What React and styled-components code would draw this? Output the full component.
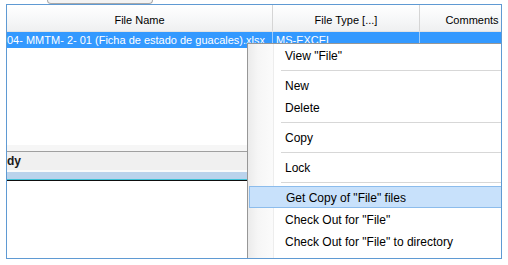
import React from "react";
import styled, { createGlobalStyle } from "styled-components";

const GlobalStyle = createGlobalStyle`
  html, body {
    margin: 0;
    padding: 0;
    background: #ffffff;
  }
  body {
    font-family: "Liberation Sans", Arial, sans-serif;
  }
`;

const Page = styled.div`
  width: 508px;
  height: 265px;
  padding-left: 6px;
  box-sizing: border-box;
`;

const TopStrip = styled.div`
  height: 4px;
  display: flex;
`;

const Tab = styled.div`
  margin-left: 41px;
  width: 104px;
  height: 3px;
  background: #f3f3f3;
  border: 1px solid #a8a8a8;
  border-top: none;
  border-radius: 0 0 4px 4px;
`;

const Frame = styled.div`
  position: relative;
  width: 496px;
  height: 255px;
  box-sizing: border-box;
  border: 1px solid #5f9ad3;
  overflow: hidden;
  display: flex;
  flex-direction: column;
`;

const HeaderRow = styled.div`
  display: flex;
  height: 26px;
  border-bottom: 1px solid #e3e3e3;
  background: linear-gradient(#ffffff, #f7f8f9 50%, #eff0f1);
`;

const HeaderCell = styled.div`
  flex: 0 0 ${(p) => p.$w}px;
  box-sizing: border-box;
  border-right: 1px solid #d5d5d5;
  padding-top: 3px;
  display: flex;
  align-items: center;
  justify-content: center;
  font-size: 11px;
  color: #000;
  white-space: nowrap;
  overflow: hidden;
`;

const DataRow = styled.div`
  display: flex;
  height: 16px;
  background: #3399ff;
`;

const DataCell = styled.div`
  flex: 0 0 ${(p) => p.$w}px;
  box-sizing: border-box;
  border-right: 1px solid #9fcdfb;
  padding-left: ${(p) => p.$pad || 0}px;
  padding-top: 1px;
  font-size: 11px;
  line-height: 15px;
  color: #ffffff;
  white-space: nowrap;
  overflow: hidden;
`;

const Blank = styled.div`
  height: 97px;
  background: #ffffff;
`;

const Fade = styled.div`
  height: 6px;
  background: #f6f6f6;
  border-bottom: 1px solid #a0a0a0;
`;

const GroupBar = styled.div`
  height: 18px;
  background: #f0f0f0;
  border-bottom: 2px solid #fafafa;
  display: flex;
  align-items: center;
  font-size: 12px;
  font-weight: bold;
  color: #1a1a1a;
`;

const BlueBar = styled.div`
  height: 7px;
  background: #bad3ec;
  border-bottom: 1px solid #3fc0d6;
`;

const DarkLine = styled.div`
  height: 1px;
  background: #0e0e0e;
`;

const Rest = styled.div`
  flex: 1;
  background: #ffffff;
`;

const Menu = styled.div`
  position: absolute;
  left: 240px;
  top: 38px;
  width: 260px;
  height: 240px;
  box-sizing: border-box;
  border: 1px solid #979797;
  background: #ffffff;
  display: flex;
`;

const Gutter = styled.div`
  position: absolute;
  left: 0;
  top: 0;
  bottom: 0;
  width: 25px;
  background: linear-gradient(to right, #ebebeb, #f6f6f6 40%, #fbfbfb);
  border-right: 1px solid #ededed;
`;

const Items = styled.div`
  position: relative;
  flex: 1;
  display: flex;
  flex-direction: column;
`;

const Item = styled.div`
  position: relative;
  height: 22px;
  box-sizing: border-box;
  margin-left: ${(p) => (p.$active ? 1 : 0)}px;
  margin-right: ${(p) => (p.$active ? 1 : 0)}px;
  padding-left: ${(p) => (p.$active ? 36 : 37)}px;
  padding-top: 1px;
  display: flex;
  align-items: center;
  font-size: 12px;
  color: #000;
  white-space: nowrap;
  background: ${(p) => (p.$active ? "#c8e1fb" : "transparent")};
  border: ${(p) => (p.$active ? "1px solid #8cbcec" : "none")};
`;

const Separator = styled.div`
  position: relative;
  height: 8px;
  display: flex;
  align-items: center;
  padding-left: 33px;
  &::after {
    content: "";
    flex: 1;
    height: 1px;
    background: #d7d7d7;
    box-shadow: 0 1px 0 #ffffff;
  }
`;

const menu = [
  { label: 'View "File"' },
  { sep: true },
  { label: "New" },
  { label: "Delete" },
  { sep: true },
  { label: "Copy" },
  { sep: true },
  { label: "Lock" },
  { sep: true },
  { label: 'Get Copy of "File" files', active: true },
  { label: 'Check Out for "File"' },
  { label: 'Check Out for "File" to directory' },
];

export default function App() {
  return (
    <Page>
      <GlobalStyle />
      <TopStrip>
        <Tab />
      </TopStrip>
      <Frame>
        <HeaderRow>
          <HeaderCell $w={266}>File Name</HeaderCell>
          <HeaderCell $w={147}>File Type [...]</HeaderCell>
          <HeaderCell $w={105}>Comments</HeaderCell>
        </HeaderRow>
        <DataRow>
          <DataCell $w={266}>04- MMTM- 2- 01 (Ficha de estado de guacales).xlsx</DataCell>
          <DataCell $w={147} $pad={3}>MS-EXCEL</DataCell>
          <DataCell $w={105} />
        </DataRow>
        <Blank />
        <Fade />
        <GroupBar>dy</GroupBar>
        <BlueBar />
        <DarkLine />
        <Rest />
        <Menu>
          <Items>
            <Gutter />
            {menu.map((m, i) =>
              m.sep ? (
                <Separator key={i} />
              ) : (
                <Item key={i} $active={m.active}>
                  {m.label}
                </Item>
              )
            )}
          </Items>
        </Menu>
      </Frame>
    </Page>
  );
}
